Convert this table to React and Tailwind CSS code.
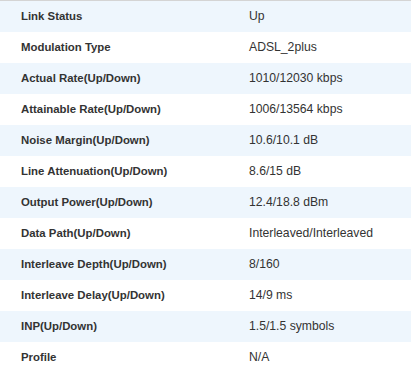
const rows = [
  ['Link Status', 'Up'],
  ['Modulation Type', 'ADSL_2plus'],
  ['Actual Rate(Up/Down)', '1010/12030 kbps'],
  ['Attainable Rate(Up/Down)', '1006/13564 kbps'],
  ['Noise Margin(Up/Down)', '10.6/10.1 dB'],
  ['Line Attenuation(Up/Down)', '8.6/15 dB'],
  ['Output Power(Up/Down)', '12.4/18.8 dBm'],
  ['Data Path(Up/Down)', 'Interleaved/Interleaved'],
  ['Interleave Depth(Up/Down)', '8/160'],
  ['Interleave Delay(Up/Down)', '14/9 ms'],
  ['INP(Up/Down)', '1.5/1.5 symbols'],
  ['Profile', 'N/A'],
]

export default function App() {
  return (
    <div className="w-[411px] h-[372px] overflow-hidden bg-white border-t border-[#d4d4d4] font-['Liberation_Sans',Arial,sans-serif] text-[12.2px] text-[#333]">
      {rows.map(([label, value], i) => (
        <div
          key={label}
          className={`flex items-center h-[31px] ${i % 2 === 0 ? 'bg-[#eef6fd]' : 'bg-white'}`}
        >
          <div className="w-[249px] pl-[21px] font-bold text-[11.4px]">{label}</div>
          <div>{value}</div>
        </div>
      ))}
    </div>
  )
}
